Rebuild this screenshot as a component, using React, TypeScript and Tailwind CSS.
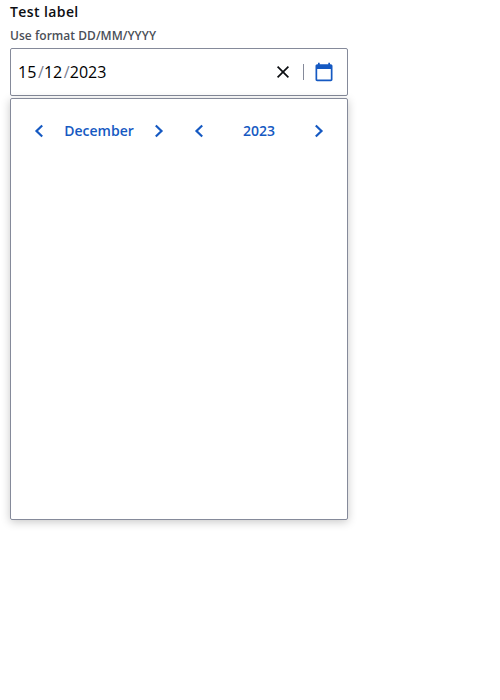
import React from "react";

const Chevron = ({ right = false }: { right?: boolean }) => (
  <svg width="24" height="24" viewBox="0 0 24 24" fill="none" stroke="#1559c2" strokeWidth="2.2" className="shrink-0">
    {right ? <path d="M8.8 6.5 14.5 12 8.8 17.5" /> : <path d="M15.2 6.5 9.5 12 15.2 17.5" />}
  </svg>
);

export default function App() {
  return (
    <div className="h-[700px] w-[500px] bg-white px-[10px] font-['Open_Sans',sans-serif] text-[#0c0e12]">
      <div className="h-6 text-sm leading-6 font-semibold tracking-[0.4px]">Test label</div>
      <div className="h-6 text-xs leading-6 font-semibold tracking-[0.03px] text-[#4b4f58]">Use format DD/MM/YYYY</div>
      <div className="flex h-12 w-[338px] items-center rounded-[2px] border border-[#858a9a] pr-[11px] pl-[7px] text-base text-black">
        <span>15</span>
        <span className="ml-[1.6px] w-[6px] text-[#7b8090]">/</span>
        <span>12</span>
        <span className="ml-[1.6px] w-[6px] text-[#7b8090]">/</span>
        <span>2023</span>
        <svg className="ml-auto" width="24" height="24" viewBox="0 0 24 24" fill="none" stroke="#0c0e12" strokeWidth="1.7">
          <path d="m6.6 6.6 10.8 10.8M17.4 6.6 6.6 17.4" />
        </svg>
        <span className="mx-2 h-4 w-px bg-[#858a9a]" />
        <svg width="24" height="24" viewBox="0 0 24 24" fill="#1559c2">
          <path fillRule="evenodd" d="M18.8 4.3H18V2.7h-1.7v1.6H7.7V2.7H6v1.6h-.8c-.9 0-1.7.8-1.7 1.7v13.6c0 .9.8 1.7 1.7 1.7h13.6c.9 0 1.7-.8 1.7-1.7V6c0-.9-.8-1.7-1.7-1.7zm0 15.3H5.2V9h13.6z" />
        </svg>
      </div>
      <div className="mt-[2px] h-[422px] w-[338px] rounded-[2px] border border-[#858a9a] px-4 pt-5 shadow-[0_2px_10px_rgba(0,0,0,0.22)]">
        <div className="flex h-6 text-sm font-semibold text-[#1559c2]">
          <div className="flex w-[144px] items-center justify-between"><Chevron /><span>December</span><Chevron right /></div>
          <div className="ml-4 flex w-[144px] items-center justify-between"><Chevron /><span>2023</span><Chevron right /></div>
        </div>
      </div>
    </div>
  );
}
